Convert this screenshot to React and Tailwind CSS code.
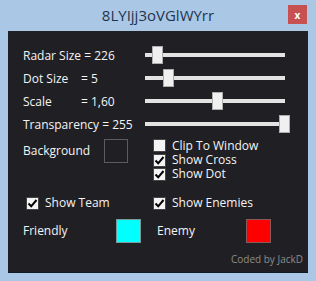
import React from 'react'

const sliders = [
    { label: 'Radar Size', eq: '= 226', pos: 7 },
    { label: 'Dot Size', eq: '= 5', pos: 18 },
    { label: 'Scale', eq: '= 1,60', pos: 67 },
    { label: 'Transparency', eq: '= 255', pos: 134 },
]

function Slider({ pos }) {
    return (
        <div className="relative w-[146px] h-[23px]">
            <div className="absolute left-0 top-[9px] w-[140px] h-[4px] bg-[#e3e3e3]" />
            <div
                className="absolute top-[2px] w-[11px] h-[18px] bg-[#f0f0f0] border border-[#adadad]"
                style={{ left: pos }}
            />
        </div>
    )
}

function Check({ checked, label }) {
    return (
        <div className="flex items-center h-full">
            <div className="w-[13px] h-[13px] bg-[#f4f4f4] border border-[#444] flex items-center justify-center">
                {checked && (
                    <svg width="11" height="11" viewBox="0 0 11 11">
                        <path d="M1.5 5.5 L4.2 8.3 L9.5 2" fill="none" stroke="#000" strokeWidth="2" />
                    </svg>
                )}
            </div>
            <span className="ml-[6px] text-[12px] text-[#f4f4f4] leading-none">{label}</span>
        </div>
    )
}

export default function App() {
    return (
        <div
            className="w-[316px] h-[281px] bg-[#abc7e6] flex flex-col"
            style={{ fontFamily: '"Open Sans", "Noto Sans", sans-serif' }}
        >
            {/* title bar */}
            <div className="h-[31px] flex items-start relative">
                <div className="flex-1 text-center pt-[5px] text-[15px] text-[#1e3550] leading-[20px]">
                    8LYIjj3oVGlWYrr
                </div>
                <div className="absolute left-[288px] top-[5px] w-[19px] h-[19px] bg-[#c75050] flex items-center justify-center text-white text-[10px] font-bold leading-none">
                    x
                </div>
            </div>

            {/* panel */}
            <div className="mx-[8px] w-[300px] h-[242px] bg-[#202024] border-b border-[#0e1a24] pt-[13px] pl-[15px] flex flex-col text-[#f4f4f4]">
                {sliders.map((s) => (
                    <div key={s.label} className="flex items-center h-[23px]">
                        <div className="w-[122px] text-[12px] leading-none flex">
                            {s.label === 'Transparency' ? (
                                <span>Transparency {s.eq}</span>
                            ) : s.label === 'Radar Size' ? (
                                <span>Radar Size {s.eq}</span>
                            ) : (
                                <>
                                    <span className="w-[58px]">{s.label}</span>
                                    <span>{s.eq}</span>
                                </>
                            )}
                        </div>
                        <Slider pos={s.pos} />
                    </div>
                ))}

                <div className="flex mt-[2px]">
                    <div className="w-[130px] flex items-center h-[25px] pt-[1px]">
                        <span className="w-[81px] text-[12px] leading-none">Background</span>
                        <div className="w-[24px] h-[24px] border border-[#5c5c5c]" />
                    </div>
                    <div className="flex flex-col">
                        <div className="h-[15px]"><Check label="Clip To Window" /></div>
                        <div className="h-[14px]"><Check checked label="Show Cross" /></div>
                        <div className="h-[14px]"><Check checked label="Show Dot" /></div>
                    </div>
                </div>

                <div className="flex mt-[15px] h-[14px]">
                    <div className="w-[130px] pl-[3px]"><Check checked label="Show Team" /></div>
                    <Check checked label="Show Enemies" />
                </div>

                <div className="flex items-center mt-[9px] h-[24px]">
                    <span className="w-[93px] text-[12px] leading-none">Friendly</span>
                    <div className="w-[25px] h-[24px] bg-[#00ffff] border border-[#7a9a9a]" />
                    <span className="ml-[16px] w-[89px] text-[12px] leading-none">Enemy</span>
                    <div className="w-[25px] h-[24px] bg-[#ff0000] border border-[#8a5a5a]" />
                </div>

                <div className="mt-[11px] pr-[5px] text-right text-[10px] text-[#8c8c8c] leading-none">
                    Coded by JackD
                </div>
            </div>
        </div>
    )
}
